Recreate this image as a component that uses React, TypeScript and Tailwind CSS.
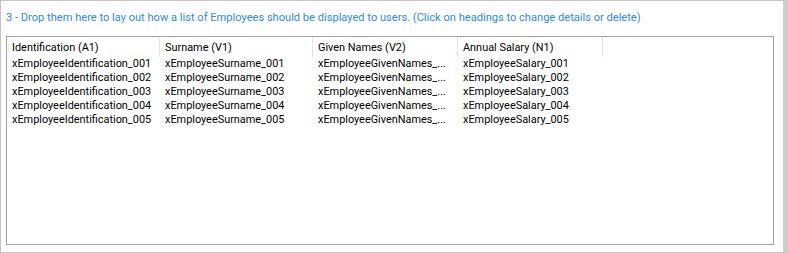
const columns = [
  { title: "Identification (A1)", width: "w-[153px]", prefix: "xEmployeeIdentification_" },
  { title: "Surname (V1)", width: "w-[153px]", prefix: "xEmployeeSurname_" },
  { title: "Given Names (V2)", width: "w-[145px]", prefix: "xEmployeeGivenNames_" },
  { title: "Annual Salary (N1)", width: "w-[145px]", prefix: "xEmployeeSalary_" },
];

const rows = ["001", "002", "003", "004", "005"];

function cellText(col: number, id: string) {
  const c = columns[col];
  // the list view cuts the long given-names values short
  if (col === 2) return c.prefix + "...";
  return c.prefix + id;
}

export default function App() {
  return (
    <div className="w-[788px] h-[253px] bg-white border-t border-l border-b border-r-[5px] border-t-[#c4c4c4] border-l-[#c4c4c4] border-b-[#c4c4c4] border-r-[#cdcdcd] font-['Roboto',sans-serif] text-[10.9px] text-black">
      <div className="h-[35px] pl-[5px] pt-[10px] leading-[14px] text-[11.1px] text-[#2f88e6]">
        3 - Drop them here to lay out how a list of Employees should be displayed to users. (Click on headings to change details or delete)
      </div>
      <div className="ml-[5px] w-[768px] h-[209px] border border-[#a0a0a0]">
        <div className="flex h-[20px]">
          {columns.map((c) => (
            <div
              key={c.title}
              className={`${c.width} shrink-0 border-r border-[#e3e3e3] pl-[5px] leading-[21px] whitespace-nowrap overflow-hidden`}
            >
              {c.title}
            </div>
          ))}
        </div>
        <div>
          {rows.map((id) => (
            <div key={id} className="flex h-[14px] leading-[14px]">
              {columns.map((c, i) => (
                <div key={c.title} className={`${c.width} shrink-0 pl-[5px] whitespace-nowrap overflow-hidden`}>
                  {cellText(i, id)}
                </div>
              ))}
            </div>
          ))}
        </div>
      </div>
    </div>
  );
}
